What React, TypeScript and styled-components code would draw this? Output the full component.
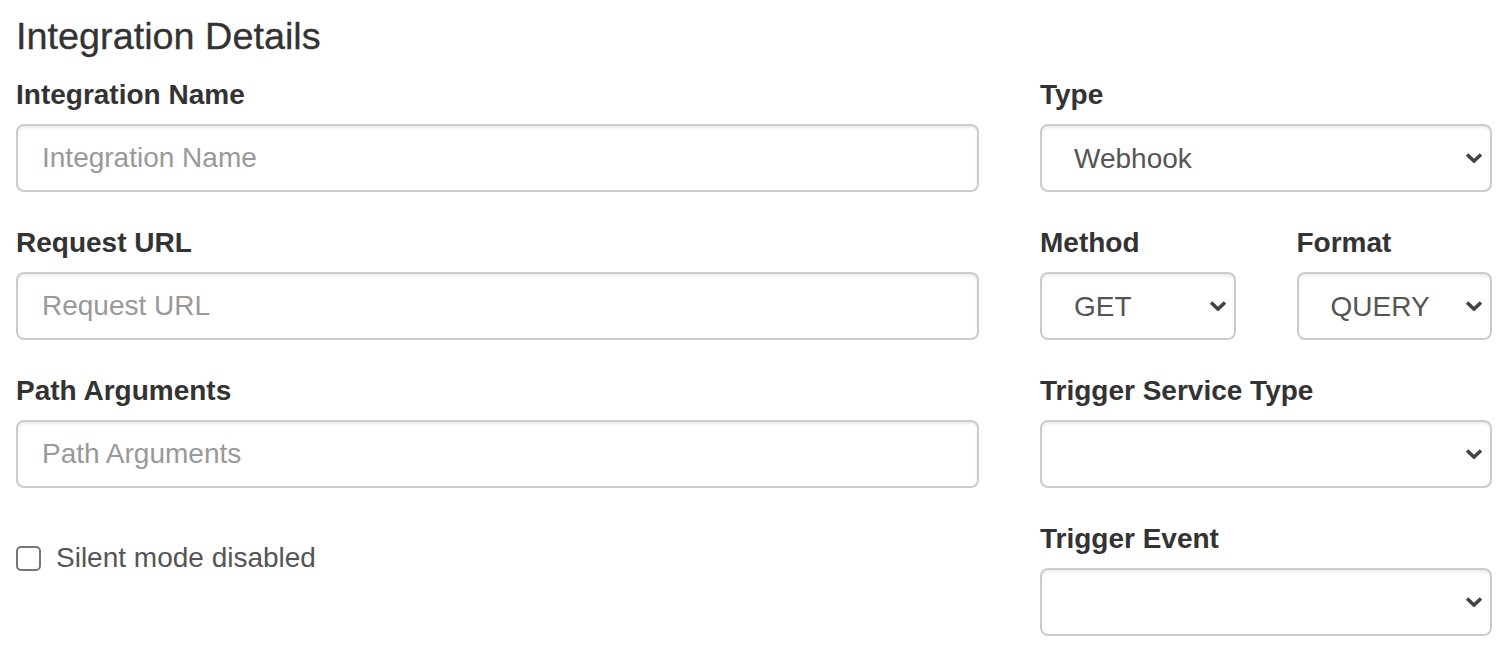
import React from 'react';
import styled, { createGlobalStyle } from 'styled-components';

const GlobalStyle = createGlobalStyle`
  html, body {
    margin: 0;
    padding: 0;
    background: #fff;
  }
  body {
    font-family: "Liberation Sans", Arial, Helvetica, sans-serif;
    color: #333;
  }
  * {
    box-sizing: border-box;
  }
`;

const Page = styled.div`
  padding: 16px 10px 0 16px;
  width: 1502px;
`;

const Title = styled.h4`
  margin: 0 0 18px;
  font-size: 37.8px;
  line-height: 41px;
  font-weight: 400;
  color: #333;
  -webkit-text-stroke: 0.3px #333;
`;

const Columns = styled.div`
  display: grid;
  grid-template-columns: 963px 452px;
  column-gap: 61px;
`;

const Column = styled.div`
  display: flex;
  flex-direction: column;
`;

const SplitRow = styled.div`
  display: grid;
  grid-template-columns: 1fr 1fr;
  column-gap: 61px;
`;

const FormGroup = styled.div`
  margin-bottom: 31px;
`;

const Label = styled.label`
  display: block;
  margin-bottom: 9px;
  font-size: 28px;
  line-height: 40px;
  font-weight: 700;
  color: #333;
`;

const fieldBase = `
  display: block;
  width: 100%;
  height: 68px;
  border: 2px solid #ccc;
  border-radius: 8px;
  background: #fff;
  box-shadow: inset 0 2px 2px rgba(0, 0, 0, 0.075);
  font-family: "Liberation Sans", Arial, Helvetica, sans-serif;
  font-size: 28px;
  color: #555;
  outline: none;
`;

const TextInput = styled.input`
  ${fieldBase}
  padding: 12px 24px;

  &::placeholder {
    color: #999;
  }
`;

const SelectWrap = styled.div`
  position: relative;
`;

const Select = styled.select`
  ${fieldBase}
  appearance: none;
  -webkit-appearance: none;
  padding: 0 40px 0 32px;
`;

const Chevron = styled.svg`
  position: absolute;
  right: 9px;
  top: 50%;
  width: 18px;
  height: 12px;
  margin-top: -6px;
  pointer-events: none;
`;

const CheckboxRow = styled.label`
  display: flex;
  align-items: center;
  gap: 15px;
  margin-top: 19px;
  height: 40px;
  font-size: 28px;
  color: #555;
  cursor: pointer;
`;

const Checkbox = styled.input`
  appearance: none;
  -webkit-appearance: none;
  margin: 0;
  width: 25px;
  height: 25px;
  border: 2px solid #767676;
  border-radius: 5px;
  background: #fff;
`;

type SelectFieldProps = {
  label: string;
  value?: string;
  options?: string[];
};

const SelectField: React.FC<SelectFieldProps> = ({ label, value = '', options = [] }) => (
  <FormGroup>
    <Label>{label}</Label>
    <SelectWrap>
      <Select defaultValue={value}>
        {options.length === 0 && <option value="" />}
        {options.map((o) => (
          <option key={o} value={o}>
            {o}
          </option>
        ))}
      </Select>
      <Chevron viewBox="0 0 18 12">
        <path d="M2 2.5 L9 9 L16 2.5" fill="none" stroke="#444" strokeWidth="3.6" strokeLinecap="butt" />
      </Chevron>
    </SelectWrap>
  </FormGroup>
);

type TextFieldProps = {
  label: string;
};

const TextField: React.FC<TextFieldProps> = ({ label }) => (
  <FormGroup>
    <Label>{label}</Label>
    <TextInput type="text" placeholder={label} />
  </FormGroup>
);

export default function App() {
  return (
    <>
      <GlobalStyle />
      <Page>
        <Title>Integration Details</Title>
        <Columns>
          <Column>
            <TextField label="Integration Name" />
            <TextField label="Request URL" />
            <TextField label="Path Arguments" />
            <CheckboxRow>
              <Checkbox type="checkbox" />
              Silent mode disabled
            </CheckboxRow>
          </Column>
          <Column>
            <SelectField label="Type" value="Webhook" options={['Webhook', 'Slack', 'Email']} />
            <SplitRow>
              <SelectField label="Method" value="GET" options={['GET', 'POST', 'PUT', 'DELETE']} />
              <SelectField label="Format" value="QUERY" options={['QUERY', 'JSON', 'FORM']} />
            </SplitRow>
            <SelectField label="Trigger Service Type" />
            <SelectField label="Trigger Event" />
          </Column>
        </Columns>
      </Page>
    </>
  );
}
